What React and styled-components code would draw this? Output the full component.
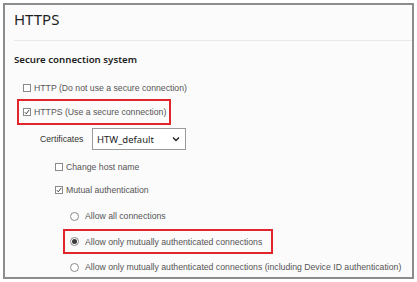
import React from 'react';
import styled, { createGlobalStyle } from 'styled-components';

const GlobalStyle = createGlobalStyle`
  html, body {
    margin: 0;
    padding: 0;
    background: #ffffff;
  }
  * {
    box-sizing: border-box;
  }
`;

const Page = styled.div`
  padding: 3px;
  width: 417px;
  height: 282px;
`;

const Frame = styled.div`
  width: 411px;
  height: 276px;
  border: 2px solid #8c8c8c;
  background: #fbfbfb;
  padding: 4px 0 0 9px;
  overflow: hidden;
`;

const Heading = styled.h1`
  margin: 0;
  font-family: "Noto Sans", "Open Sans", sans-serif;
  font-size: 15px;
  line-height: 20px;
  font-weight: 400;
  color: #1e1e1e;
`;

const Divider = styled.div`
  margin-top: 11px;
  border-top: 1px solid #e8e8e8;
`;

const SectionTitle = styled.h2`
  margin: 12px 0 0;
  font-family: "Noto Sans", "Open Sans", sans-serif;
  font-size: 9.7px;
  line-height: 14px;
  font-weight: 600;
  color: #1e1e1e;
`;

const Row = styled.div`
  display: flex;
  align-items: center;
  height: 14px;
  margin-top: ${p => p.$top || 0}px;
  margin-left: ${p => p.$indent || 0}px;
`;

const Highlight = styled.div`
  display: inline-flex;
  align-items: center;
  height: ${p => p.$h}px;
  margin-top: ${p => p.$top}px;
  margin-left: ${p => p.$indent}px;
  padding: 0 ${p => p.$right}px 0 ${p => p.$left}px;
  border: 2px solid #e0252c;
`;

const Label = styled.span`
  font-family: "Liberation Sans", Arial, sans-serif;
  font-size: 8.7px;
  color: ${p => p.$dark ? '#333333' : '#555555'};
  white-space: nowrap;
`;

const Box = styled.span`
  display: inline-flex;
  align-items: center;
  justify-content: center;
  width: 8px;
  height: 8px;
  border: 1px solid #8a8a8a;
  background: #ffffff;
  margin-right: ${p => p.$gap}px;
  flex: none;
`;

const Radio = styled.span`
  display: inline-flex;
  align-items: center;
  justify-content: center;
  width: 9px;
  height: 9px;
  border-radius: 50%;
  border: 1px solid #8a8a8a;
  background: #ffffff;
  margin-right: 6px;
  flex: none;
`;

const Dot = styled.span`
  width: 5px;
  height: 5px;
  border-radius: 50%;
  background: #3a3a3a;
`;

const CertRow = styled.div`
  display: flex;
  align-items: center;
  margin-top: 3px;
  margin-left: 26px;
`;

const CertLabel = styled(Label)`
  width: 52px;
`;

const SelectBox = styled.div`
  display: flex;
  align-items: center;
  justify-content: space-between;
  width: 94px;
  height: 22px;
  padding: 0 5px 0 4px;
  border: 1px solid #9a9a9a;
  background: #ffffff;
  font-family: "Noto Sans", "Open Sans", sans-serif;
  font-size: 9.5px;
  color: #1e1e1e;
`;

function Checkbox ({ checked, gap = 3, label }) {
  return (
    <>
      <Box $gap={gap}>
        {checked &&
          <svg width="6" height="6" viewBox="0 0 6 6">
            <path d="M0.8 3.2 L2.3 4.8 L5.2 0.9" fill="none" stroke="#333" strokeWidth="0.9" />
          </svg>
        }
      </Box>
      <Label>{label}</Label>
    </>
  );
}

function RadioOption ({ checked, label }) {
  return (
    <>
      <Radio>{checked && <Dot />}</Radio>
      <Label>{label}</Label>
    </>
  );
}

export default function App () {
  return (
    <Page>
      <GlobalStyle />
      <Frame>
        <Heading>HTTPS</Heading>
        <Divider />
        <SectionTitle>Secure connection system</SectionTitle>

        <Row $top={14} $indent={9}>
          <Checkbox label="HTTP (Do not use a secure connection)" />
        </Row>

        <Highlight $h={26} $top={4} $indent={3} $left={4} $right={3}>
          <Checkbox checked label="HTTPS (Use a secure connection)" />
        </Highlight>

        <CertRow>
          <CertLabel $dark>Certificates</CertLabel>
          <SelectBox>
            HTW_default
            <svg width="8" height="6" viewBox="0 0 8 6">
              <path d="M1 1.5 L4 4.5 L7 1.5" fill="none" stroke="#222" strokeWidth="1.4" />
            </svg>
          </SelectBox>
        </CertRow>

        <Row $top={10} $indent={41}>
          <Checkbox label="Change host name" />
        </Row>

        <Row $top={9} $indent={41}>
          <Checkbox checked label="Mutual authentication" />
        </Row>

        <Row $top={12} $indent={56}>
          <RadioOption label="Allow all connections" />
        </Row>

        <Highlight $h={25} $top={6} $indent={49} $left={5} $right={9}>
          <RadioOption checked label="Allow only mutually authenticated connections" />
        </Highlight>

        <Row $top={6} $indent={56}>
          <RadioOption label="Allow only mutually authenticated connections (including Device ID authentication)" />
        </Row>
      </Frame>
    </Page>
  );
}
